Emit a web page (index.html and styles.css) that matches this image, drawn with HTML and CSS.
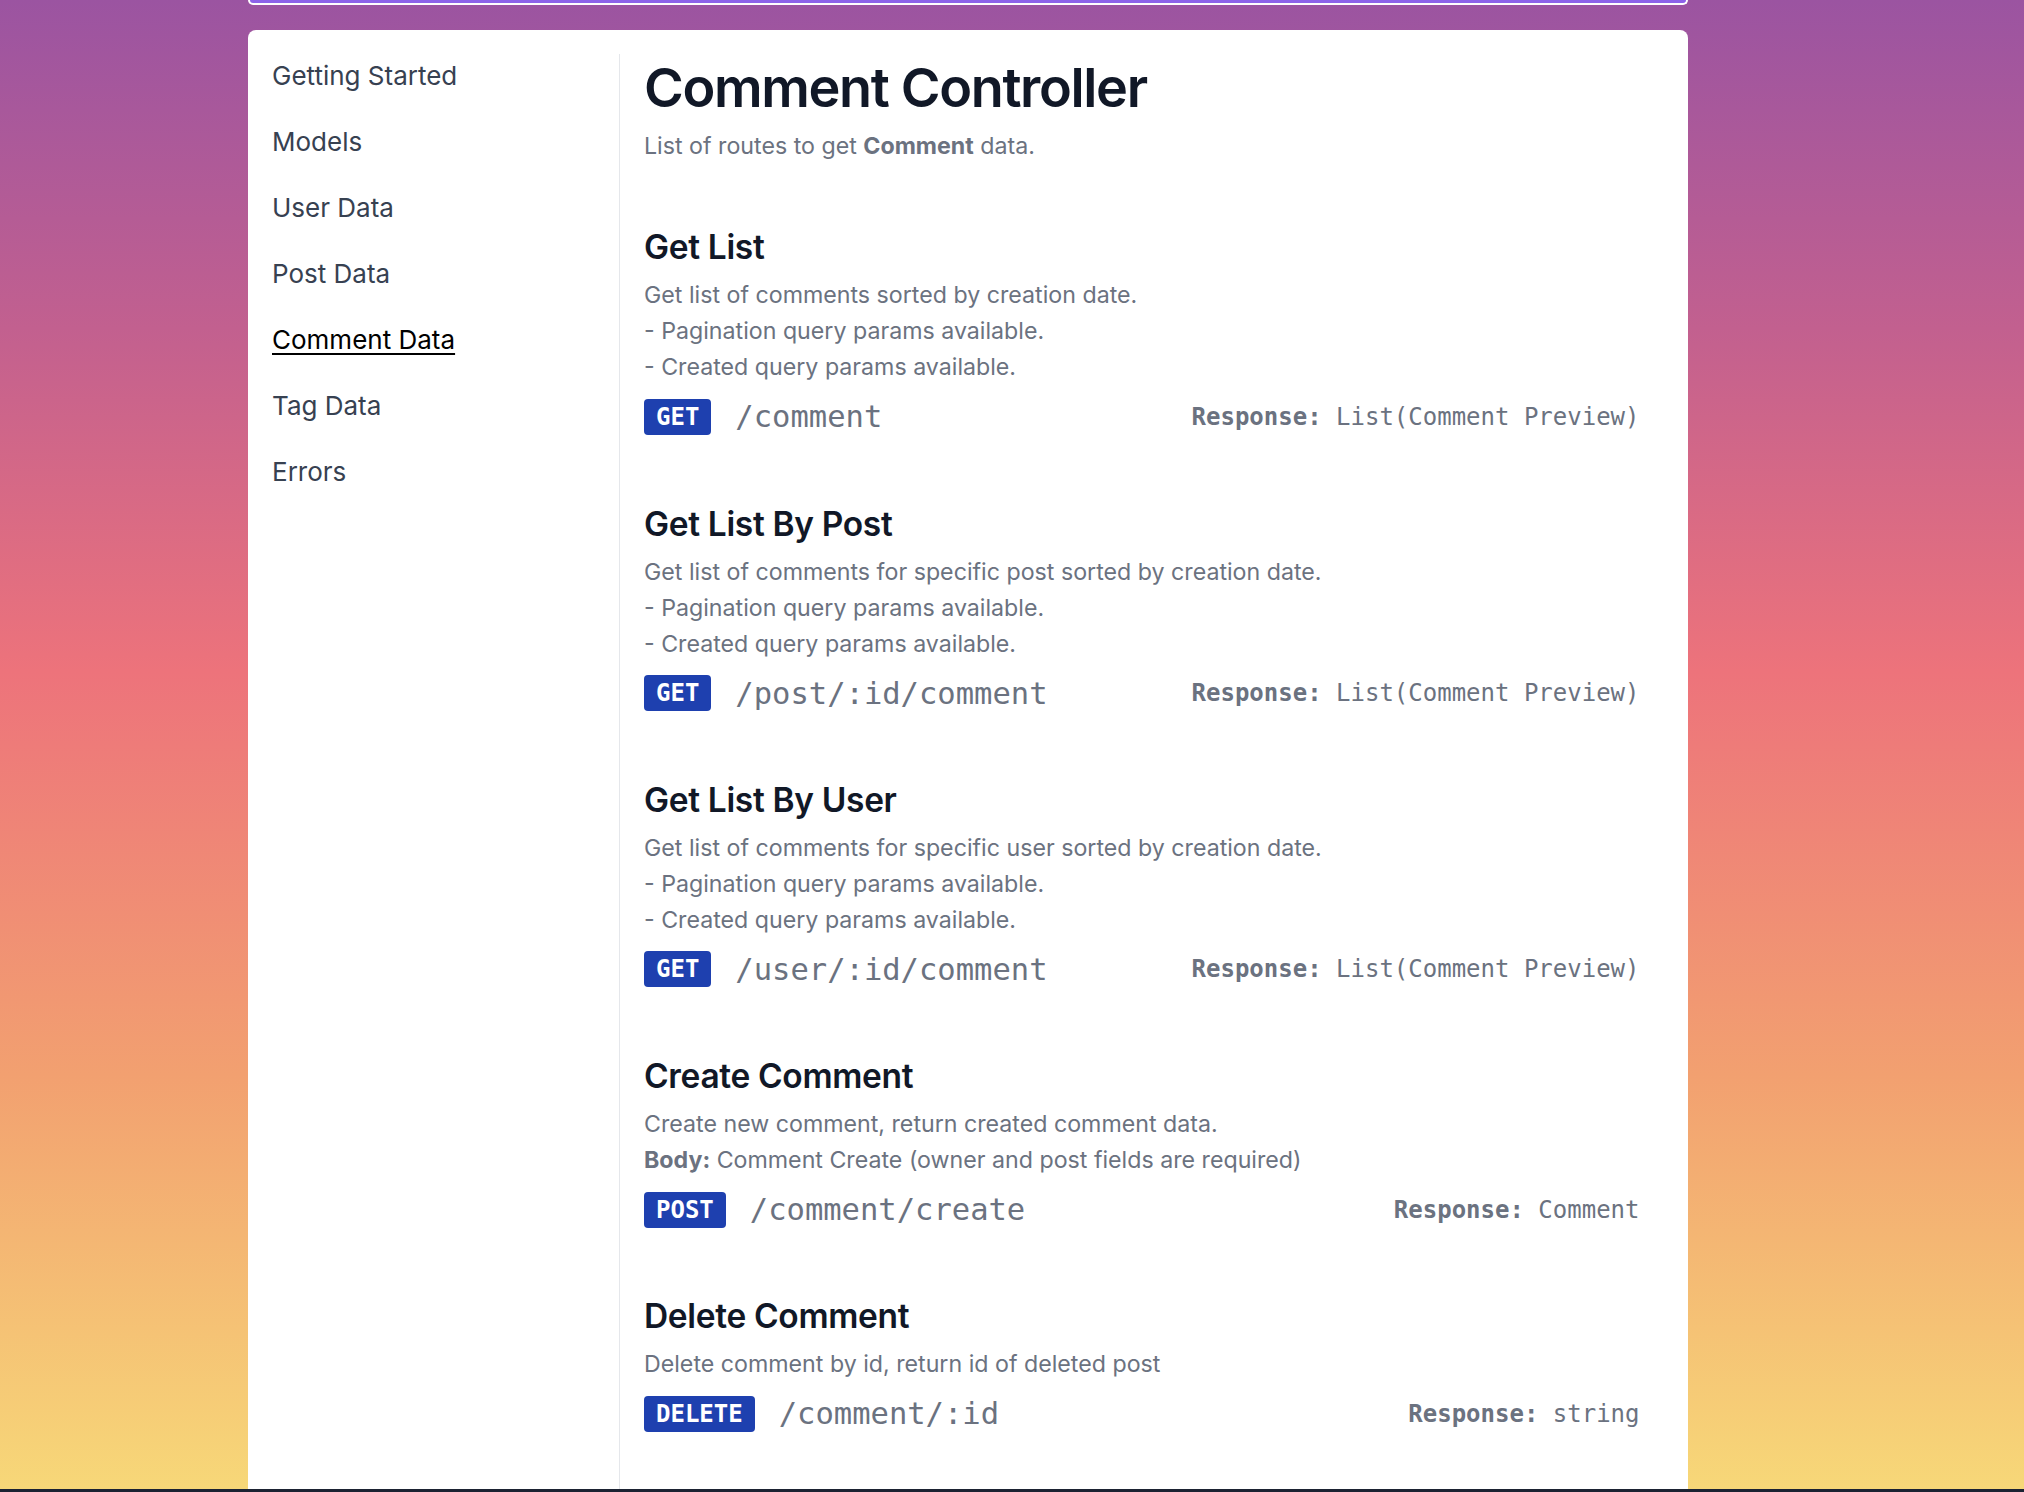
FILE: index.html
```html
<!DOCTYPE html>
<html lang="en">
<head>
<meta charset="utf-8">
<title>Comment Controller</title>
<link rel="stylesheet" href="styles.css">
</head>
<body>
<div class="page">
  <div class="topbar"></div>
  <div class="card">
    <aside class="sidebar">
      <nav class="nav">
        <a class="nav-link" href="#">Getting Started</a>
        <a class="nav-link" href="#">Models</a>
        <a class="nav-link" href="#">User Data</a>
        <a class="nav-link" href="#">Post Data</a>
        <a class="nav-link active" href="#">Comment Data</a>
        <a class="nav-link" href="#">Tag Data</a>
        <a class="nav-link" href="#">Errors</a>
      </nav>
    </aside>
    <main class="content">
      <header class="intro">
        <h1 class="title">Comment Controller</h1>
        <p class="subtitle">List of routes to get <b>Comment</b> data.</p>
      </header>

      <section class="route">
        <h2 class="route-title">Get List</h2>
        <div class="route-desc">
          <p>Get list of comments sorted by creation date.</p>
          <p>- Pagination query params available.</p>
          <p>- Created query params available.</p>
        </div>
        <div class="route-row">
          <span class="method">GET</span>
          <span class="path">/comment</span>
          <span class="response"><b>Response:</b> List(Comment Preview)</span>
        </div>
      </section>

      <section class="route">
        <h2 class="route-title">Get List By Post</h2>
        <div class="route-desc">
          <p>Get list of comments for specific post sorted by creation date.</p>
          <p>- Pagination query params available.</p>
          <p>- Created query params available.</p>
        </div>
        <div class="route-row">
          <span class="method">GET</span>
          <span class="path">/post/:id/comment</span>
          <span class="response"><b>Response:</b> List(Comment Preview)</span>
        </div>
      </section>

      <section class="route">
        <h2 class="route-title">Get List By User</h2>
        <div class="route-desc">
          <p>Get list of comments for specific user sorted by creation date.</p>
          <p>- Pagination query params available.</p>
          <p>- Created query params available.</p>
        </div>
        <div class="route-row">
          <span class="method">GET</span>
          <span class="path">/user/:id/comment</span>
          <span class="response"><b>Response:</b> List(Comment Preview)</span>
        </div>
      </section>

      <section class="route">
        <h2 class="route-title">Create Comment</h2>
        <div class="route-desc">
          <p>Create new comment, return created comment data.</p>
          <p><b>Body:</b> Comment Create (owner and post fields are required)</p>
        </div>
        <div class="route-row">
          <span class="method">POST</span>
          <span class="path">/comment/create</span>
          <span class="response"><b>Response:</b> Comment</span>
        </div>
      </section>

      <section class="route">
        <h2 class="route-title">Delete Comment</h2>
        <div class="route-desc">
          <p>Delete comment by id, return id of deleted post</p>
        </div>
        <div class="route-row">
          <span class="method">DELETE</span>
          <span class="path">/comment/:id</span>
          <span class="response"><b>Response:</b> string</span>
        </div>
      </section>
    </main>
  </div>
  <div class="window-edge"></div>
</div>
</body>
</html>
```

FILE: styles.css
```css
html, body {
  margin: 0;
  padding: 0;
  height: 100%;
}

body {
  font-family: Inter, "Noto Sans", "Liberation Sans", sans-serif;
  background: linear-gradient(180deg, #9b54a1 0%, #c2608f 22%, #ed737b 45%, #f2a070 72%, #f7d878 100%);
  overflow: hidden;
}

.page {
  height: 100vh;
  display: flex;
  flex-direction: column;
  align-items: flex-start;
  padding-left: 248px;
  box-sizing: border-box;
}

.topbar {
  width: 1440px;
  height: 5px;
  flex-shrink: 0;
  box-sizing: border-box;
  background: #8d63e9;
  border: 2px solid #ffffff;
  border-top: 0;
  border-radius: 0 0 8px 8px;
}

.card {
  width: 1440px;
  margin-top: 25px;
  flex: 1;
  min-height: 0;
  box-sizing: border-box;
  background: #ffffff;
  border-radius: 8px 8px 0 0;
  display: flex;
  padding: 24px 24px 0 24px;
  overflow: hidden;
}

.window-edge {
  align-self: stretch;
  margin-left: -248px;
  height: 3px;
  flex-shrink: 0;
  background: #1b2232;
}

/* Sidebar */
.sidebar {
  width: 348px;
  flex-shrink: 0;
  box-sizing: border-box;
  border-right: 1px solid #e5e7eb;
}

.nav {
  display: flex;
  flex-direction: column;
  gap: 33px;
  padding-top: 5px;
}

.nav-link {
  font-size: 26px;
  line-height: 33px;
  color: #374151;
  text-decoration: none;
}

.nav-link.active {
  color: #000000;
  text-decoration: underline;
  text-underline-offset: 4px;
  text-decoration-thickness: 2px;
}

/* Content */
.content {
  flex: 1;
  min-width: 0;
  padding: 0 24.5px 0 24px;
}

.intro {
  padding-top: 2px;
}

.title {
  margin: 0 0 8px;
  font-size: 54px;
  line-height: 64px;
  font-weight: 600;
  color: #111827;
  letter-spacing: -0.025em;
}

.subtitle {
  margin: 0;
  font-size: 23.2px;
  line-height: 36px;
  color: #6b7280;
}

.subtitle b,
.route-desc b {
  font-weight: 700;
}

.route {
  margin-top: 63.8px;
}

.route:first-of-type {
  margin-top: 60.3px;
}

.route-title {
  margin: 0 0 7px;
  font-size: 33.5px;
  line-height: 46px;
  font-weight: 600;
  color: #111827;
  letter-spacing: -0.01em;
}

.route-desc p {
  margin: 0;
  font-size: 23.2px;
  line-height: 36px;
  color: #6b7280;
}

.route-row {
  margin-top: 11.5px;
  height: 40px;
  display: flex;
  align-items: center;
  font-family: "DejaVu Sans Mono", "Liberation Mono", monospace;
}

.method {
  height: 36px;
  line-height: 36px;
  padding: 0 12px;
  border-radius: 4px;
  background: #1e40af;
  color: #ffffff;
  font-size: 24px;
  font-weight: 700;
}

.path {
  margin-left: 24px;
  font-size: 30.5px;
  color: #6b7280;
}

.response {
  margin-left: auto;
  font-size: 24px;
  color: #6b7280;
}

.response b {
  font-weight: 700;
}
```
